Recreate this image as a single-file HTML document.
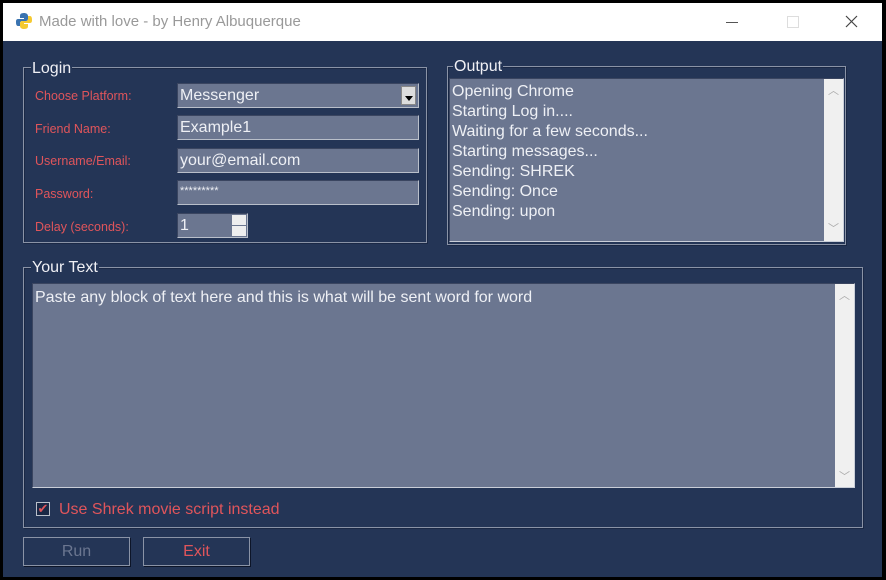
<!DOCTYPE html>
<html><head><style>
body{margin:0;width:886px;height:580px;overflow:hidden;background:#000;font-family:"Liberation Sans",sans-serif;position:relative}
.win{position:absolute;left:3px;top:3px;width:879px;height:574px;background:#243556}
.title{position:absolute;left:0;top:0;width:879px;height:38px;background:#fff}
.title span{position:absolute;left:36px;top:10px;font-size:15px;color:#999}
.a{position:absolute}
.frame{position:absolute;border:1px solid #8a93a6;box-shadow:inset 1px 1px 0 #1a2845,1px 1px 0 #1a2845}
.leg{position:absolute;background:#243556;color:#f0f0f5;font-size:16px;padding:0 1px}
.lbl{position:absolute;color:#e0555b;font-size:12.5px}
.fld{position:absolute;background:#6b7690;border:1px solid #b9bfca;border-top-color:#3a4560;border-left-color:#3a4560;color:#eef0f5;font-size:16px;box-sizing:border-box;padding:3px 0 0 2px}
.ta{position:absolute;background:#6b7690;color:#eef0f5;font-size:16px;box-sizing:border-box;border:1px solid #c9ced8;border-top-color:#3a4560;border-left-color:#3a4560}
.sb{position:absolute;right:0;top:0;bottom:0;background:#f0f0f0;color:#aaa;font-size:11px;text-align:center}
.btn{position:absolute;border:1px solid #8a93a6;box-shadow:1px 1px 0 #0d1528;font-size:16px;text-align:center;line-height:27px;box-sizing:border-box}
</style></head><body>
<div class="win">
<div class="title">
<svg class="a" style="left:12px;top:9px" width="18" height="18" viewBox="0 0 18 18"><path d="M9 1C5 1 5 3 5 4v2h4v1H3C1 7 1 9 1 10s0 4 2 4h2v-3c0-1 1-2 2-2h4c1 0 2-1 2-2V4c0-2-2-3-4-3z" fill="#3a73b0"/><path d="M9 17c4 0 4-2 4-3v-2H9v-1h6c2 0 2-2 2-3s0-4-2-4h-2v3c0 1-1 2-2 2H7c-1 0-2 1-2 2v3c0 2 2 3 4 3z" fill="#f5c930"/></svg>
<span>Made with love - by Henry Albuquerque</span>
<div class="a" style="left:723px;top:19px;width:12px;height:1px;background:#555"></div>
<div class="a" style="left:784px;top:13px;width:10px;height:10px;border:1px solid #ddd"></div>
<svg class="a" style="left:842px;top:12px" width="13" height="13"><path d="M1 1L12 12M12 1L1 12" stroke="#444" stroke-width="1.2"/></svg>
</div>

<div class="frame" style="left:20px;top:64px;width:402px;height:174px"></div>
<div class="leg" style="left:28px;top:57px">Login</div>
<div class="lbl" style="left:32px;top:86px">Choose Platform:</div>
<div class="lbl" style="left:32px;top:119px">Friend Name:</div>
<div class="lbl" style="left:32px;top:151px">Username/Email:</div>
<div class="lbl" style="left:32px;top:184px">Password:</div>
<div class="lbl" style="left:32px;top:217px">Delay (seconds):</div>
<div class="fld" style="left:174px;top:80px;width:242px;height:25px">Messenger<div class="a" style="right:2px;top:2px;width:15px;height:19px;background:#ddd;border:1px solid #888;box-sizing:border-box"><div class="a" style="left:3px;top:9px;border:4px solid transparent;border-top:5px solid #000"></div></div></div>
<div class="fld" style="left:174px;top:112px;width:242px;height:25px">Example1</div>
<div class="fld" style="left:174px;top:145px;width:242px;height:25px">your@email.com</div>
<div class="fld" style="left:174px;top:177px;width:242px;height:25px;font-size:11px;padding-top:4px">*********</div>
<div class="fld" style="left:174px;top:210px;width:71px;height:25px">1<div class="a" style="right:1px;top:1px;width:14px;height:10px;background:#eee"></div><div class="a" style="right:1px;top:12px;width:14px;height:10px;background:#eee"></div></div>

<div class="frame" style="left:444px;top:63px;width:397px;height:177px"></div>
<div class="leg" style="left:450px;top:55px">Output</div>
<div class="ta" style="left:446px;top:75px;width:395px;height:164px;padding:3px 0 0 2px;line-height:20px">Opening Chrome<br>Starting Log in....<br>Waiting for a few seconds...<br>Starting messages...<br>Sending: SHREK<br>Sending: Once<br>Sending: upon
<div class="sb" style="width:19px"><div style="margin-top:2px">︿</div><div style="position:absolute;bottom:2px;width:19px">﹀</div></div></div>

<div class="frame" style="left:20px;top:264px;width:838px;height:259px"></div>
<div class="leg" style="left:28px;top:256px">Your Text</div>
<div class="ta" style="left:29px;top:280px;width:823px;height:205px;padding:5px 0 0 2px">Paste any block of text here and this is what will be sent word for word
<div class="sb" style="width:19px"><div style="margin-top:3px">︿</div><div style="position:absolute;bottom:3px;width:19px">﹀</div></div></div>

<div class="a" style="left:33px;top:499px;width:14px;height:14px;background:#1a2845;border:1px solid #b9bfca;box-sizing:border-box;color:#e0555b;font-size:13px;line-height:12px;text-align:center">✔</div>
<div class="a" style="left:56px;top:498px;color:#e0555b;font-size:16px">Use Shrek movie script instead</div>

<div class="btn" style="left:20px;top:534px;width:107px;height:29px;color:#6b7690">Run</div>
<div class="btn" style="left:140px;top:534px;width:107px;height:29px;color:#e0555b">Exit</div>
</div>
</body></html>
